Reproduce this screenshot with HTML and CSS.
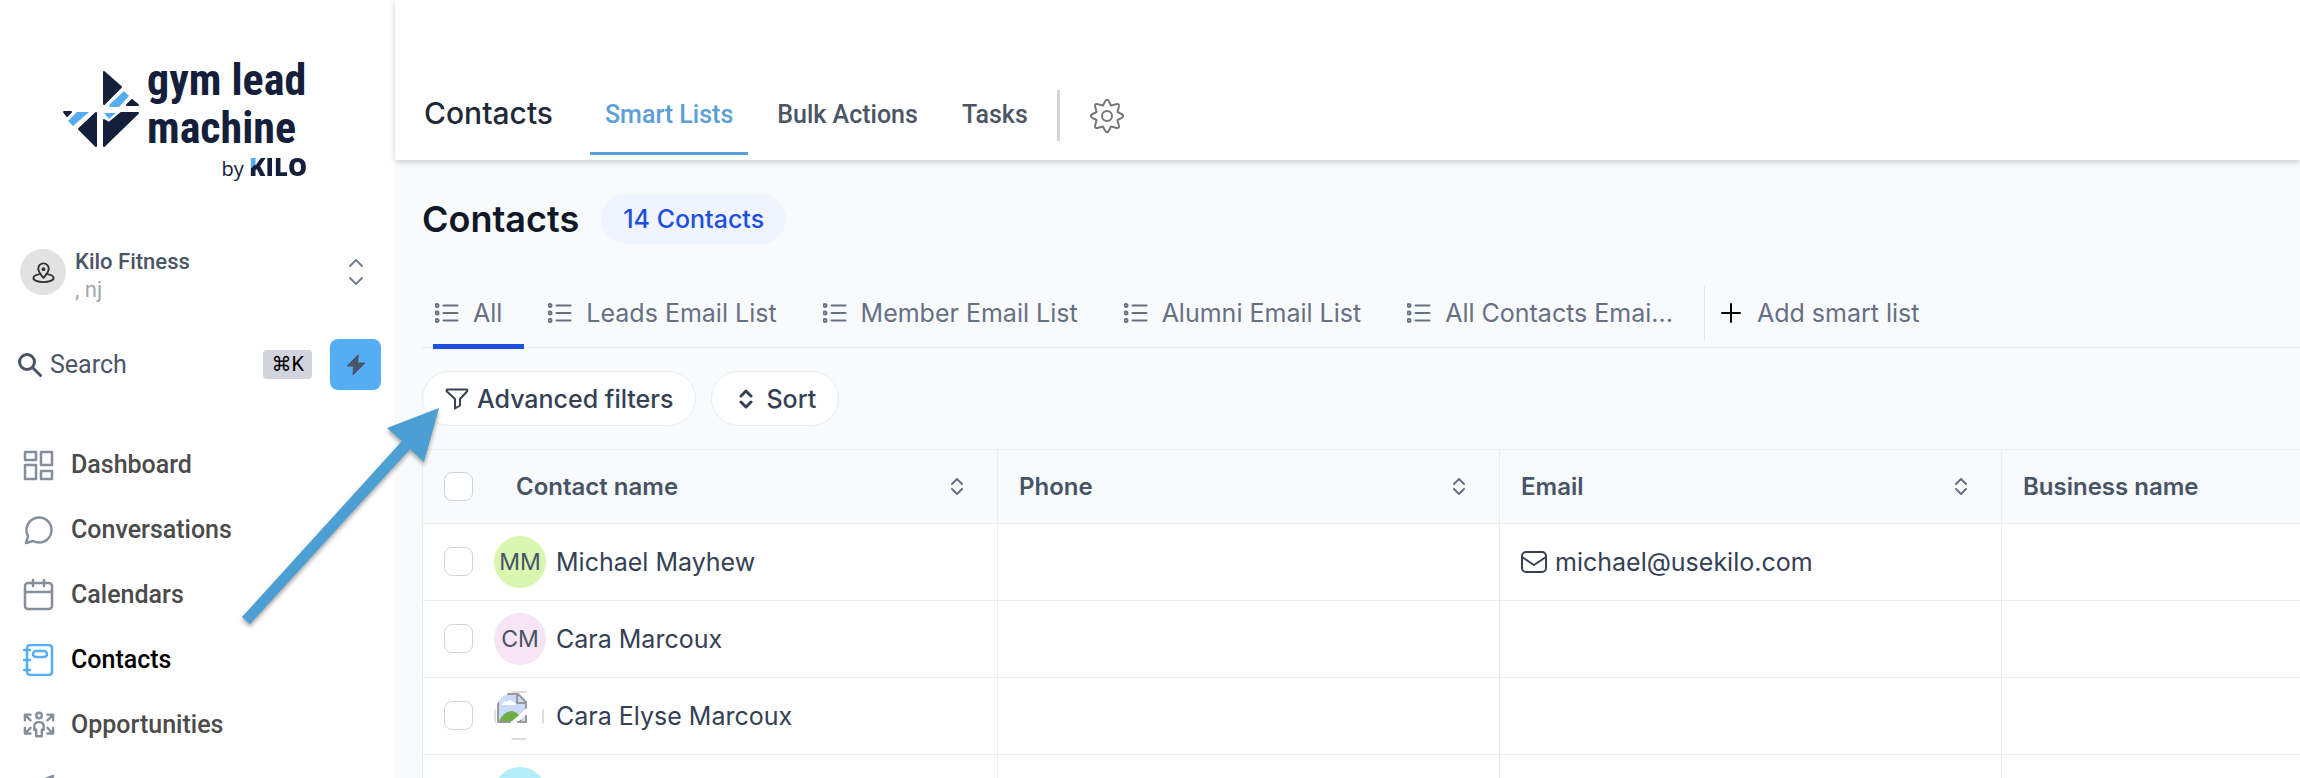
FILE: index.html
```
<!DOCTYPE html>
<html lang="en">
<head>
  <meta charset="UTF-8">
  <meta name="viewport" content="width=device-width, initial-scale=1.0">
  <title>Contacts</title>
  <link rel="stylesheet" href="styles.css">
</head>
<body>

<!-- icons used more than once -->
<svg class="sprite" aria-hidden="true">
  <symbol id="icon-list" viewBox="0 0 24 20">
    <path d="M8.500 2.500h14M8.500 10h14M8.500 17.500h14" />
    <g stroke-width="3"><circle cx="2" cy="2.500" r="1" /><circle cx="2" cy="10" r="1" /><circle cx="2" cy="17.500" r="1" /></g>
  </symbol>
  <symbol id="icon-sort" viewBox="0 0 16 20">
    <path d="M3 7l5-5 5 5M3 13l5 5 5-5" />
  </symbol>
  <symbol id="icon-sorter" viewBox="0 0 12 17">
    <path d="M1 6l5-5 5 5M1 11l5 5 5-5" />
  </symbol>
</svg>

<div class="app">
  <aside class="sidebar">
    <a class="logo" href="#" aria-label="gym lead machine by KILO">
      <svg class="logo-mark" viewBox="0 0 78 78">
        <g fill="#14203b" stroke="#14203b" stroke-width="2" stroke-linejoin="round">
          <path d="M42 2v32l17-17z" />
          <path d="M70 30l6 5h-11z" />
          <path d="M2 42h7l-4 4z" />
          <path d="M34 43v33L17 59z" />
          <path d="M42 50v26l34-33H59L47 53z" />
        </g>
        <g fill="#55adf0">
          <path d="M62 21l5 5-10 11H48l-1-2z" />
          <path d="M15 42h12L11 56l-5-5z" />
          <path d="M42 43h12l-7 6z" />
        </g>
      </svg>
      <span class="logo-text">
        <span class="logo-name">gym lead<br>machine</span>
        <span class="logo-by">by <b>KILO</b></span>
      </span>
    </a>

    <button class="location" type="button">
      <span class="location-icon">
        <svg viewBox="0 0 24 24"><path d="M12 17.500c-3.500-4-5.500-6.600-5.500-9.500a5.500 5.500 0 0 1 11 0c0 2.900-2 5.500-5.500 9.500zM7 14c-3 .5-5.500 1.800-5.500 3.700C1.500 20.200 6 22 12 22s10.500-1.800 10.500-4.300c0-1.900-2.500-3.200-5.500-3.700" /><circle cx="12" cy="8.500" r="1" /></svg>
      </span>
      <span class="location-text">
        <strong>Kilo Fitness</strong>
        <small>, nj</small>
      </span>
      <svg class="location-arrows" viewBox="0 0 14 26"><path d="M1 7l6-6 6 6M1 19l6 6 6-6" /></svg>
    </button>

    <div class="search-row">
      <button class="search" type="button">
        <svg viewBox="0 0 24 24"><circle cx="9" cy="9" r="7.500" /><path d="M14.500 14.500l8 8" /></svg>
        <span>Search</span>
        <kbd>⌘K</kbd>
      </button>
      <button class="quick" type="button" aria-label="Quick actions">
        <svg viewBox="0 0 20 22"><path d="M12 1L1 12h6.500L7 21 19 9h-7z" /></svg>
      </button>
    </div>

    <nav class="menu">
      <a href="#">
        <svg viewBox="0 0 32 32"><path d="M2 3h11v8H2zM18 3h11v13H18zM2 16h11v14H2zM18 22h11v8H18z" /></svg>
        Dashboard
      </a>
      <a href="#">
        <svg viewBox="0 0 32 32"><path d="M3 29l2-7a12.500 12.500 0 1 1 5 5z" /></svg>
        Conversations
      </a>
      <a href="#">
        <svg viewBox="0 0 32 32"><rect x="2" y="4" width="27" height="26" rx="3" /><path d="M2 13h27M10 1v6M21 1v6" /></svg>
        Calendars
      </a>
      <a href="#" class="active">
        <svg viewBox="0 0 32 32"><rect x="4" y="1" width="25" height="30" rx="3" /><rect x="10" y="7" width="14" height="6" rx="3" /><path d="M1 6h6M1 16h6M1 26h6" /></svg>
        Contacts
      </a>
      <a href="#">
        <svg viewBox="0 0 34 32"><circle cx="17" cy="6" r="3" /><path d="M14 28v-7h-2v-4q0-4 5-4t5 4v4h-2v7zM2 11V5h6M2 5l6 6M32 11V5h-6M32 5l-6 6M2 19v6h6M2 25l6-6M32 19v6h-6M32 25l-6-6" /></svg>
        Opportunities
      </a>
      <a href="#" aria-label="Payments">
        <svg viewBox="0 0 32 32"><path d="M30 2L3 13l10 5 5 11zM30 2L13 18" /></svg>
      </a>
    </nav>
  </aside>

  <main class="main">
    <header class="topbar">
      <h2>Contacts</h2>
      <nav class="topnav">
        <a href="#" class="active">Smart Lists</a>
        <a href="#">Bulk Actions</a>
        <a href="#">Tasks</a>
      </nav>
      <button class="settings" type="button" aria-label="Settings">
        <svg viewBox="0 0 36 36"><circle cx="18" cy="18" r="5" /><path d="M15.500 4.500Q18-1 20.500 4.500L22 7.500 26 6.500Q31.500 4.500 29.500 10L28.500 14 31.500 15.500Q37 18 31.500 20.500L28.500 22 29.500 26Q31.500 31.500 26 29.500L22 28.500 20.500 31.500Q18 37 15.500 31.500L14 28.500 10 29.500Q4.500 31.500 6.500 26L7.500 22 4.500 20.500Q-1 18 4.500 15.500L7.500 14 6.500 10Q4.500 4.500 10 6.500L14 7.500z" /></svg>
      </button>
    </header>

    <section class="content">
      <div class="title">
        <h1>Contacts</h1>
        <span class="count">14 Contacts</span>
      </div>

      <nav class="lists">
        <a href="#" class="active"><svg><use href="#icon-list" /></svg>All</a>
        <a href="#"><svg><use href="#icon-list" /></svg>Leads Email List</a>
        <a href="#"><svg><use href="#icon-list" /></svg>Member Email List</a>
        <a href="#"><svg><use href="#icon-list" /></svg>Alumni Email List</a>
        <a href="#"><svg><use href="#icon-list" /></svg>All Contacts Emai...</a>
        <button class="add-list" type="button">
          <svg viewBox="0 0 20 20"><path d="M10 1v18M1 10h18" /></svg>
          Add smart list
        </button>
      </nav>

      <div class="filters">
        <button class="pill" type="button">
          <svg class="icon-funnel" viewBox="0 0 24 22"><path d="M2 1.500h20q1 1-.500 2.500L15 11v6.500L10 20.500V11L2.500 4Q1 2.500 2 1.500z" /></svg>
          Advanced filters
        </button>
        <button class="pill pill-sort" type="button">
          <svg class="icon-sort"><use href="#icon-sort" /></svg>
          Sort
        </button>
      </div>

      <table class="contacts">
        <thead>
          <tr>
            <th class="col-name">
              <div class="cell">
                <input type="checkbox" aria-label="Select all contacts">
                <span class="name-label">Contact name</span>
                <svg class="sorter"><use href="#icon-sorter" /></svg>
              </div>
            </th>
            <th class="col"><div class="cell">Phone <svg class="sorter"><use href="#icon-sorter" /></svg></div></th>
            <th class="col"><div class="cell">Email <svg class="sorter"><use href="#icon-sorter" /></svg></div></th>
            <th><div class="cell">Business name</div></th>
          </tr>
        </thead>
        <tbody>
          <tr>
            <td>
              <div class="cell">
                <input type="checkbox" aria-label="Select Michael Mayhew">
                <span class="avatar green">MM</span>
                Michael Mayhew
              </div>
            </td>
            <td></td>
            <td>
              <div class="cell email">
                <svg viewBox="0 0 26 22"><rect x="1" y="1" width="24" height="20" rx="4" /><path d="M1 6l12 8 12-8" /></svg>
                michael@usekilo.com
              </div>
            </td>
            <td></td>
          </tr>
          <tr>
            <td>
              <div class="cell">
                <input type="checkbox" aria-label="Select Cara Marcoux">
                <span class="avatar pink">CM</span>
                Cara Marcoux
              </div>
            </td>
            <td></td>
            <td></td>
            <td></td>
          </tr>
          <tr>
            <td>
              <div class="cell">
                <input type="checkbox" aria-label="Select Cara Elyse Marcoux">
                <svg class="avatar" viewBox="0 0 52 52">
                  <path d="M4 12Q8 5 14 4h10l8 8v20H4z" fill="#c9dafb" />
                  <path d="M8 14q1-4 5-2 3-4 6 0 3 0 3 3H8z" fill="#fff" />
                  <path d="M5 31q5-10 13-10 6 0 10 10z" fill="#70ad47" />
                  <path d="M16 33L33 18v6L23 33z" fill="#fff" />
                  <path d="M4 12v20h12M32 26v6h-8M14 4h10l8 8v6M23 4v9h9" fill="none" stroke="#999" stroke-width="2" />
                  <path d="M18 2h14M18 49h14M49 20v13M1 20v13" fill="none" stroke="#bbb" stroke-width="1" />
                </svg>
                Cara Elyse Marcoux
              </div>
            </td>
            <td></td>
            <td></td>
            <td></td>
          </tr>
          <tr>
            <td>
              <div class="cell">
                <input type="checkbox" aria-label="Select contact">
                <span class="avatar cyan"></span>
              </div>
            </td>
            <td></td>
            <td></td>
            <td></td>
          </tr>
        </tbody>
      </table>
    </section>
  </main>
</div>

<!-- arrow pointing at the filters button -->
<svg class="pointer" viewBox="0 0 240 260" aria-hidden="true">
  <path d="M219 28l-15 54-14-13L30 244l-8-7L182 61l-15-13z" />
</svg>

</body>
</html>
```

FILE: styles.css
```
* {
  box-sizing: border-box;
}

body {
  margin: 0;
  font-family: Inter, "Liberation Sans", sans-serif;
  font-size: 25px;
  color: #344054;
}

h1, h2 {
  margin: 0;
}

a {
  color: inherit;
  text-decoration: none;
}

button {
  padding: 0;
  border: none;
  background: none;
  font: inherit;
  color: inherit;
  cursor: pointer;
}

svg {
  flex: none;
  fill: none;
  stroke: currentColor;
  stroke-width: 2;
  stroke-linecap: round;
  stroke-linejoin: round;
}

.sprite {
  display: none;
}

.app {
  display: flex;
  height: 100vh;
  overflow: hidden;
}

/* sidebar */
.sidebar {
  flex: none;
  width: 395px;
  padding-top: 52px;
  background: #fff;
  font-family: Roboto, "Liberation Sans", sans-serif;
}

.logo {
  display: flex;
  gap: 7px;
  height: 188px;
  padding-left: 62px;
  color: #14203b;
}

.logo-mark {
  width: 78px;
  height: 78px;
  margin-top: 18px;
  stroke: none;
}

.logo-text {
  display: flex;
  flex-direction: column;
  gap: 2px;
  width: 160px;
  padding-top: 4px;
  white-space: nowrap;
}

.logo-name {
  font-family: "Roboto Condensed", Roboto, sans-serif;
  font-size: 44px;
  font-weight: 700;
  line-height: 48px;
}

.logo-by {
  text-align: right;
  font-family: "Open Sans", sans-serif;
  font-size: 20px;
  line-height: 26px;
}

.logo-by b {
  background: linear-gradient(135deg, #55adf0 22%, #14203b 22%);
  background-clip: text;
  -webkit-background-clip: text;
  color: transparent;
  font-size: 24px;
  font-weight: 800;
}

.location {
  display: flex;
  align-items: center;
  width: 100%;
  padding: 0 32px 0 20px;
  text-align: left;
}

.location-icon {
  display: flex;
  align-items: center;
  justify-content: center;
  width: 46px;
  height: 46px;
  border-radius: 50%;
  background: #e2e2e2;
  color: #333;
}

.location-icon svg {
  width: 23px;
  height: 23px;
}

.location-text {
  flex: 1;
  padding: 8px 0 0 9px;
  line-height: 28px;
}

.location-text strong,
.location-text small {
  display: block;
  font-size: 22px;
}

.location-text strong {
  font-weight: 500;
  color: #4a5568;
}

.location-text small {
  color: #a0a6b1;
}

.location-arrows {
  width: 14px;
  height: 26px;
  color: #718096;
}

.search-row {
  display: flex;
  align-items: center;
  gap: 18px;
  padding: 35px 14px 42px 18px;
}

.search {
  display: flex;
  flex: 1;
  align-items: center;
  gap: 8px;
  color: #4a5568;
}

.search svg {
  width: 24px;
  height: 24px;
  stroke-width: 3;
}

.search kbd {
  margin-left: auto;
  padding: 0 8px;
  border-radius: 4px;
  background: #d1d3dd;
  font-family: Roboto, "DejaVu Sans", sans-serif;
  font-size: 20px;
  line-height: 29px;
  color: #000;
}

.quick {
  display: flex;
  align-items: center;
  justify-content: center;
  width: 51px;
  height: 51px;
  border-radius: 8px;
  background: #55adf5;
  color: #4a5568;
}

.quick svg {
  width: 20px;
  height: 22px;
  fill: currentColor;
  stroke-width: 1;
}

.menu a {
  display: flex;
  align-items: center;
  gap: 16px;
  height: 65px;
  padding-left: 23px;
  font-weight: 500;
  color: #4b4b4b;
}

.menu svg {
  width: 32px;
  height: 32px;
  stroke-width: 2.5;
  color: #858e9c;
}

.menu .active {
  color: #000;
}

.menu .active svg {
  color: #55adf5;
}

/* top bar */
.main {
  display: flex;
  flex: 1;
  flex-direction: column;
  min-width: 0;
  background: #f9fafc;
}

.topbar {
  display: flex;
  flex: none;
  align-items: center;
  height: 160px;
  padding: 76px 0 5px 29px;
  background: #fff;
  box-shadow: 0 2px 6px rgba(0, 0, 0, 0.2);
}

.topbar h2 {
  padding-bottom: 6px;
  font-size: 30px;
  font-weight: 500;
  color: #1f2937;
}

.topnav {
  display: flex;
  align-self: stretch;
  gap: 14px;
  margin-left: 37px;
  padding-right: 14px;
  font-family: Roboto, "Liberation Sans", sans-serif;
}

.topnav a {
  display: flex;
  align-items: center;
  padding: 0 15px;
  border-bottom: 3px solid transparent;
  font-weight: 500;
  color: #4b5563;
}

.topnav .active {
  border-color: #5a9fd8;
  color: #5a9fd8;
}

.settings {
  display: flex;
  align-items: center;
  height: 51px;
  padding-left: 29px;
  border-left: 3px solid #d1d3dd;
  color: #777;
}

.settings svg {
  width: 36px;
  height: 36px;
}

/* contacts page */
.content {
  padding: 34px 0 0 27px;
}

.title {
  display: flex;
  align-items: center;
  gap: 22px;
}

.title h1 {
  font-size: 36px;
  font-weight: 600;
  color: #101828;
}

.count {
  padding: 0 22px;
  border-radius: 25px;
  background: #eff4ff;
  font-weight: 500;
  line-height: 50px;
  color: #1d4fe0;
}

.lists {
  display: flex;
  height: 104px;
  padding: 40px 0 0 11px;
  border-bottom: 1px solid #e4e7ec;
  color: #667085;
}

.lists a {
  display: flex;
  align-items: center;
  gap: 14px;
  height: 65px;
  margin-right: 22px;
  padding: 0 22px 8px 2px;
}

.lists a:last-of-type {
  margin-right: 9px;
}

.lists a svg {
  width: 24px;
  height: 20px;
}

.lists .active {
  border-bottom: 5px solid #1f51e0;
  padding-bottom: 3px;
}

.add-list {
  display: flex;
  align-items: center;
  gap: 16px;
  height: 54px;
  margin-top: 2px;
  padding-left: 16px;
  border-left: 1px solid #e4e7ec;
}

.add-list svg {
  width: 20px;
  height: 20px;
  color: #000;
}

.filters {
  display: flex;
  gap: 15px;
  padding: 23px 0;
}

.pill {
  display: flex;
  align-items: center;
  gap: 8px;
  height: 55px;
  padding: 0 22px;
  border: 1px solid #eaecf0;
  border-radius: 28px;
  background: #fff;
  font-weight: 500;
}

.pill-sort {
  gap: 12px;
  padding-left: 26px;
}

.icon-funnel {
  width: 24px;
  height: 22px;
}

.icon-sort {
  width: 16px;
  height: 20px;
  stroke-width: 3;
}

/* contacts table */
.contacts {
  width: 100%;
  border-collapse: collapse;
  table-layout: fixed;
}

.contacts th,
.contacts td {
  height: 77px;
  padding: 0 21px;
  border: 1px solid #eaecf0;
  text-align: left;
}

.contacts th:last-child,
.contacts td:last-child {
  border-right: none;
}

.contacts th {
  height: 74px;
  font-size: 24px;
  font-weight: 600;
  color: #475467;
}

.contacts tbody {
  background: #fff;
}

.col-name {
  width: 575px;
}

.col {
  width: 502px;
}

.cell {
  display: flex;
  align-items: center;
  gap: 10px;
}

.cell input {
  appearance: none;
  flex: none;
  width: 29px;
  height: 29px;
  margin: 0 11px 0 0;
  border: 1px solid #d0d5dd;
  border-radius: 8px;
  background: #fff;
}

td .cell input {
  margin-bottom: 2px;
}

.name-label {
  padding-left: 22px;
}

.sorter {
  width: 12px;
  height: 17px;
  margin-left: auto;
  margin-right: 13px;
  color: #667085;
}

.avatar {
  flex: none;
  width: 52px;
  height: 52px;
  border-radius: 50%;
  font-size: 23px;
  line-height: 52px;
  text-align: center;
  color: #475467;
}

svg.avatar {
  stroke: none;
}

.green {
  background: #d9f7b0;
}

.pink {
  background: #f7e5f5;
}

.cyan {
  background: #b5ecf9;
}

.email {
  gap: 8px;
}

.email svg {
  width: 26px;
  height: 22px;
}

/* lies over the sidebar and the page */
.pointer {
  position: absolute;
  left: 220px;
  top: 380px;
  width: 240px;
  height: 260px;
  fill: #4c9fd3;
  stroke: none;
  filter: drop-shadow(0 3px 2px rgba(0, 0, 0, 0.35));
  pointer-events: none;
}
```
